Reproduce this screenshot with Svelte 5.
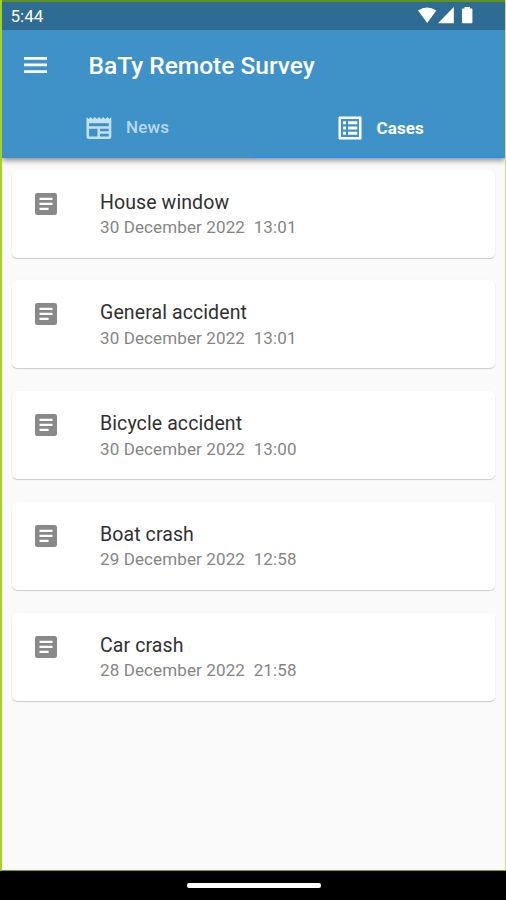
<script>
  const cases = [
    { title: 'House window', date: '30 December 2022', time: '13:01' },
    { title: 'General accident', date: '30 December 2022', time: '13:01' },
    { title: 'Bicycle accident', date: '30 December 2022', time: '13:00' },
    { title: 'Boat crash', date: '29 December 2022', time: '12:58' },
    { title: 'Car crash', date: '28 December 2022', time: '21:58' }
  ];
</script>

<div class="phone">
  <div class="screen">
    <header>
      <div class="status">
        <span class="clock">5:44</span>
        <svg class="signals" width="56" height="18" viewBox="0 0 56 18" fill="#fff">
          <path d="M0 3.5Q9 -2.5 18.3 3.5L9.2 16Z" />
          <path d="M20 16.2L35.8 0V16.2Z" />
          <path d="M44 2.2Q44 1.5 44.7 1.5H46.5V0H52V1.5H53.7Q54.4 1.5 54.4 2.2V15.4Q54.4 16.2 53.6 16.2H44.8Q44 16.2 44 15.4Z" />
        </svg>
      </div>
      <div class="bar">
        <svg width="23" height="16" viewBox="0 0 23 16" fill="#fff">
          <path d="M0 0H23V2.7H0ZM0 6.6H23V9.3H0ZM0 13.2H23V15.9H0Z" />
        </svg>
        <h1>BaTy Remote Survey</h1>
      </div>
      <nav>
        <div class="tab news">
          <svg width="26" height="24" viewBox="0 0 26 24" fill="#c4e0f5">
            <path fill-rule="evenodd" d="M.5 1L2.6 3L4.7 1L6.8 3L8.9 1L11 3L13 1L15.1 3L17.2 1L19.3 3L21.4 1L23.4 3L25.3 1V20.5Q25.3 23 22.8 23H3Q.5 23 .5 20.5ZM3 7.3V10.2H22.8V7.3ZM3 12.8V20.4H11.5V12.8ZM14 12.8V15.3H22.8V12.8ZM14 17.8V20.4H22.8V17.8Z" />
          </svg>
          <span>News</span>
        </div>
        <div class="tab active">
          <svg width="24" height="24" viewBox="0 0 24 24" fill="#fff">
            <path fill-rule="evenodd" d="M1.5 .5H22.5Q23.5 .5 23.5 1.5V22.5Q23.5 23.5 22.5 23.5H1.5Q.5 23.5 .5 22.5V1.5Q.5 .5 1.5 .5ZM3 3V21H21V3Z" />
            <path d="M5 5.3H8V8.3H5ZM5 10.5H8V13.5H5ZM5 15.7H8V18.7H5ZM10 5.3H19.3V8.3H10ZM10 10.5H19.3V13.5H10ZM10 15.7H19.3V18.7H10Z" />
          </svg>
          <span>Cases</span>
        </div>
      </nav>
    </header>
    <main>
      {#each cases as item}
        <article>
          <svg width="22" height="22" viewBox="0 0 22 22">
            <rect width="22" height="22" rx="2.3" fill="#898989" />
            <path d="M4.5 4.7H17.5V7H4.5ZM4.5 9.7H17.5V12H4.5ZM4.5 14.8H13.6V17.1H4.5Z" fill="#fff" />
          </svg>
          <div class="text">
            <h2>{item.title}</h2>
            <p>{item.date}&nbsp; {item.time}</p>
          </div>
        </article>
      {/each}
    </main>
  </div>
  <footer><i></i></footer>
</div>

<style>
  :global(body) { margin: 0; }
  .phone {
    width: 506px;
    height: 900px;
    display: flex;
    flex-direction: column;
    background: #000;
    overflow: hidden;
    font-family: Roboto, sans-serif;
  }
  .screen {
    box-sizing: border-box;
    height: 871px;
    display: flex;
    flex-direction: column;
    background: #fafafa;
    border: solid #a5d220;
    border-width: 0 1px 1px 2px;
    border-right-color: #c8e36c;
    border-bottom-color: #75962b;
  }
  header {
    height: 158px;
    flex: none;
    box-sizing: border-box;
    background: #3e92c8;
    box-shadow: 0 2px 6px rgba(0, 0, 0, .5);
    clip-path: inset(0 0 -12px 0);
    position: relative;
  }
  .status {
    height: 30px;
    box-sizing: border-box;
    border-top: 2px solid #5f9220;
    background: #2f6c94;
    display: flex;
    justify-content: space-between;
    padding: 0 31px 0 8.5px;
  }
  .clock { color: #fff; font-size: 17px; line-height: 28px; }
  .signals { margin-top: 5px; }
  .bar { height: 68px; display: flex; align-items: center; padding-left: 21.5px; }
  .bar svg { margin-top: 2px; }
  h1 {
    margin: 3px 0 0 42px;
    color: #fff;
    font-size: 24.5px;
    font-weight: 500;
    line-height: 32px;
    white-space: nowrap;
  }
  nav { height: 60px; display: flex; }
  .tab {
    flex: 1;
    box-sizing: border-box;
    display: flex;
    align-items: center;
    color: #b9d8ed;
    font-size: 17px;
    font-weight: 500;
    padding: 0 0 0 84px;
    border-bottom: 1px solid transparent;
  }
  .news span { margin: -1px 0 0 14px; letter-spacing: .15px; }
  .active { color: #fff; border-bottom: 2px solid #2b8fec; font-weight: 700; }
  .active span { margin: 1px 0 0 15px; letter-spacing: .1px; }
  .active svg { margin-top: 1px; }
  .tab svg { flex: none; }
  main { display: flex; flex-direction: column; gap: 22.8px; padding: 11.6px 10px 0 10px; }
  article {
    height: 88px;
    box-sizing: border-box;
    display: flex;
    background: #fff;
    border-radius: 5px;
    box-shadow: 0 1px 1px rgba(0, 0, 0, .18), 0 0 2px rgba(0, 0, 0, .03);
    padding: 23px 0 0 23px;
  }
  .text { margin-left: 43px; }
  h2 { margin: -3px 0 0; color: #303030; font-size: 19.5px; font-weight: 400; line-height: 26px; letter-spacing: .1px; }
  p { margin: -.5px 0 0; color: #858585; font-size: 17px; line-height: 24px; letter-spacing: .12px; }
  footer { flex: 1; display: flex; justify-content: center; align-items: center; }
  i { width: 134px; height: 5px; border-radius: 2px; background: #fff; margin-left: 1px; }
</style>
